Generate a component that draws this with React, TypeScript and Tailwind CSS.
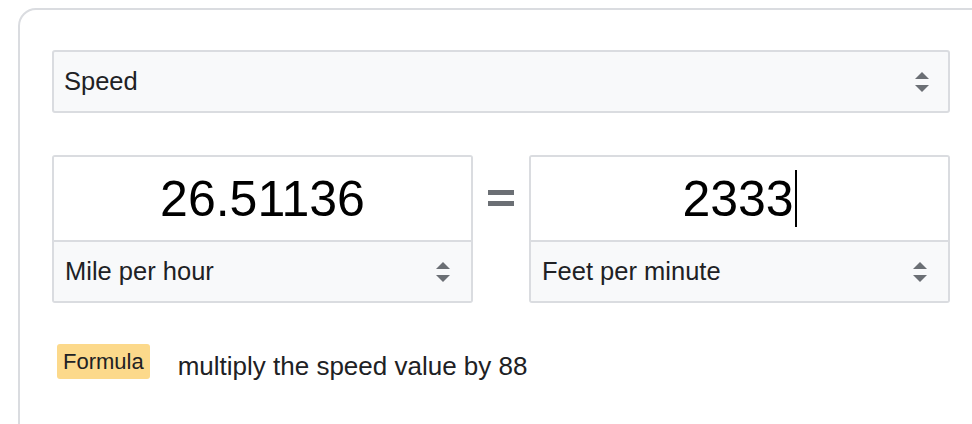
// Unit converter card: category select, two value boxes with unit selects, and a formula line.
const FONT = "font-[family-name:'Liberation_Sans',Arial,sans-serif]";

function UpDown() {
  return (
    <svg width="16" height="22" viewBox="0 0 16 22" aria-hidden="true" className="shrink-0">
      <path d="M8 1 L15 8 L1 8 Z" fill="#6b6f74" />
      <path d="M1 14 L15 14 L8 21 Z" fill="#6b6f74" />
    </svg>
  );
}

function UnitBox({ value, unit, caret }: { value: string; unit: string; caret?: boolean }) {
  return (
    <div className="flex h-[148px] w-[421px] flex-col overflow-hidden rounded-[3px] border-2 border-[#dadce0]">
      <div className="flex h-[83px] items-center justify-center bg-white text-[50px] leading-none text-black">
        <span>{value}</span>
        {caret && <span className="ml-[1px] h-[57px] w-[2px] bg-black" />}
      </div>
      <div className="flex flex-1 items-center justify-between border-t-2 border-[#dadce0] bg-[#f8f9fa] pl-[11px] pr-[20px] text-[25.5px] text-[#202124]">
        <span>{unit}</span>
        <UpDown />
      </div>
    </div>
  );
}

export default function App() {
  return (
    <div className={`h-[424px] w-full overflow-hidden bg-white ${FONT}`}>
      <div className="ml-[18px] mt-[8px] w-[1000px] rounded-tl-[18px] border-2 border-[#dadce0] pb-10 pl-[32px] pt-[40px]">
        <div className="w-[898px]">
          <div className="flex h-[63px] items-center justify-between rounded-[3px] border-2 border-[#dadce0] bg-[#f8f9fa] pl-[10px] pr-[18px] text-[25.5px] text-[#202124]">
            <span>Speed</span>
            <UpDown />
          </div>

          <div className="mt-[42px] flex items-start">
            <UnitBox value="26.51136" unit="Mile per hour" />
            <div className="flex h-[85px] w-[56px] flex-col items-center justify-center gap-[6px]">
              <span className="block h-[5px] w-[26px] bg-[#6b6f74]" />
              <span className="block h-[5px] w-[26px] bg-[#6b6f74]" />
            </div>
            <UnitBox value="2333" unit="Feet per minute" caret />
          </div>

          <div className="mt-[41px] flex items-start pl-[5px]">
            <span className="flex h-[35px] items-center rounded-[3px] bg-[#fcd98b] px-[6px] text-[22px] text-[#202124]">
              Formula
            </span>
            <span className="ml-[28px] mt-[3px] text-[26px] text-[#202124]">multiply the speed value by 88</span>
          </div>
        </div>
      </div>
    </div>
  );
}
